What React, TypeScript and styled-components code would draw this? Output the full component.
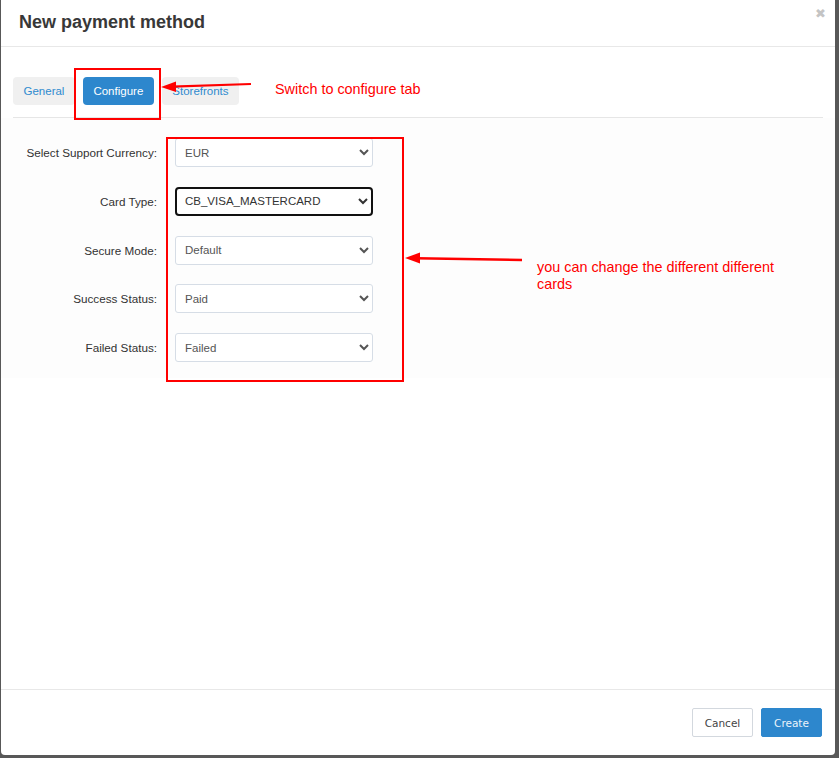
import React from 'react';
import styled, { createGlobalStyle } from 'styled-components';

const GlobalStyle = createGlobalStyle`
    html, body {
        margin: 0;
        padding: 0;
        background: #585858;
        font-family: "Liberation Sans", Arial, sans-serif;
    }
`;

const Page = styled.div`
    position: relative;
    width: 839px;
    height: 758px;
    overflow: hidden;
`;

const Modal = styled.div`
    margin-left: 1px;
    width: 834px;
    height: 755px;
    background: #ffffff;
    border-radius: 0 0 4px 4px;
    display: flex;
    flex-direction: column;
`;

const Header = styled.div`
    display: flex;
    justify-content: space-between;
    align-items: flex-start;
    height: 46px;
    padding: 0 9px 0 18px;
    border-bottom: 1px solid #e8e8e8;
`;

const Title = styled.h4`
    margin: 0;
    font-size: 18px;
    line-height: 44px;
    font-weight: 700;
    color: #383838;
`;

const Close = styled.span`
    margin-top: 6px;
    font-family: "DejaVu Sans", sans-serif;
    font-size: 13px;
    font-weight: 700;
    color: #c4c4c4;
`;

const Body = styled.div`
    flex: 1;
    padding: 30px 12px 0;
`;

const TabBar = styled.div`
    display: flex;
    gap: 8px;
    padding-bottom: 12px;
    border-bottom: 1px solid #e6e6e6;
`;

const Tab = styled.div<{ $active?: boolean }>`
    height: 28px;
    padding: 0 10.5px;
    display: flex;
    align-items: center;
    border-radius: 4px;
    font-size: 11.5px;
    background: ${(p) => (p.$active ? '#2d87cd' : '#f0f0f0')};
    color: ${(p) => (p.$active ? '#ffffff' : '#2f8bcf')};
`;

const FormPanel = styled.div`
    margin: 0 -12px;
    padding: 20px 0 16px 12px;
    background: #fdfdfd;
    display: flex;
    flex-direction: column;
    gap: 19.75px;
`;

const Row = styled.div`
    display: flex;
    align-items: center;
    gap: 18px;
`;

const Label = styled.label`
    width: 144px;
    text-align: right;
    font-size: 11.7px;
    color: #333333;
`;

const Select = styled.select<{ $focused?: boolean }>`
    width: 198px;
    height: 29px;
    box-sizing: border-box;
    padding: 0 4px 0 ${(p) => (p.$focused ? '4px' : '5px')};
    font-family: "Liberation Sans", Arial, sans-serif;
    font-size: 11.5px;
    color: ${(p) => (p.$focused ? '#333333' : '#555555')};
    background: #ffffff;
    border: ${(p) => (p.$focused ? '2px solid #111111' : '1px solid #d6dde6')};
    border-radius: ${(p) => (p.$focused ? '4px' : '3px')};
    outline: none;
`;

const Footer = styled.div`
    display: flex;
    justify-content: flex-end;
    gap: 8px;
    padding: 18px 13px 18px;
    border-top: 1px solid #e8e8e8;
`;

const Button = styled.button<{ $primary?: boolean }>`
    height: 29px;
    width: 61px;
    padding: 0;
    font-family: "DejaVu Sans", sans-serif;
    font-size: 10.5px;
    border-radius: 2px;
    border: 1px solid ${(p) => (p.$primary ? '#2d87cd' : '#d3d8de')};
    background: ${(p) => (p.$primary ? '#2d87cd' : '#ffffff')};
    color: ${(p) => (p.$primary ? '#eaf3fb' : '#444444')};
`;

const Overlay = styled.svg`
    position: absolute;
    left: 0;
    top: 0;
    pointer-events: none;
`;

const Note = styled.div<{ $left: number; $top: number; $width?: number }>`
    position: absolute;
    left: ${(p) => p.$left}px;
    top: ${(p) => p.$top}px;
    width: ${(p) => (p.$width ? `${p.$width}px` : 'auto')};
    font-size: 14.4px;
    line-height: 16.7px;
    color: #ff0000;
    white-space: ${(p) => (p.$width ? 'normal' : 'nowrap')};
`;

const fields = [
    { label: 'Select Support Currency:', value: 'EUR' },
    { label: 'Card Type:', value: 'CB_VISA_MASTERCARD', focused: true },
    { label: 'Secure Mode:', value: 'Default' },
    { label: 'Success Status:', value: 'Paid' },
    { label: 'Failed Status:', value: 'Failed' },
];

const App = () => {
    return (
        <>
            <GlobalStyle />
            <Page>
                <Modal>
                    <Header>
                        <Title>New payment method</Title>
                        <Close>✖</Close>
                    </Header>
                    <Body>
                        <TabBar>
                            <Tab>General</Tab>
                            <Tab $active>Configure</Tab>
                            <Tab>Storefronts</Tab>
                        </TabBar>
                        <FormPanel>
                            {fields.map((f) => (
                                <Row key={f.label}>
                                    <Label>{f.label}</Label>
                                    <Select $focused={f.focused} defaultValue={f.value}>
                                        <option>{f.value}</option>
                                    </Select>
                                </Row>
                            ))}
                        </FormPanel>
                    </Body>
                    <Footer>
                        <Button>Cancel</Button>
                        <Button $primary>Create</Button>
                    </Footer>
                </Modal>

                {/* annotations drawn over the screenshot */}
                <Overlay width="839" height="758" viewBox="0 0 839 758">
                    <rect x="75" y="69" width="85" height="50" fill="none" stroke="#ff0000" strokeWidth="2" />
                    <rect x="167" y="138" width="236" height="243" fill="none" stroke="#ff0000" strokeWidth="2" />
                    <line x1="251" y1="84" x2="172" y2="86.6" stroke="#ff0000" strokeWidth="2.2" />
                    <polygon points="161,87 176,81.5 176,92" fill="#ff0000" />
                    <line x1="522" y1="260" x2="416" y2="258.2" stroke="#ff0000" strokeWidth="2.4" />
                    <polygon points="405,258 420,252.5 420,263.5" fill="#ff0000" />
                </Overlay>
                <Note $left={275} $top={81}>Switch to configure tab</Note>
                <Note $left={537} $top={259} $width={250}>
                    you can change the different different cards
                </Note>
            </Page>
        </>
    );
};

export default App;
